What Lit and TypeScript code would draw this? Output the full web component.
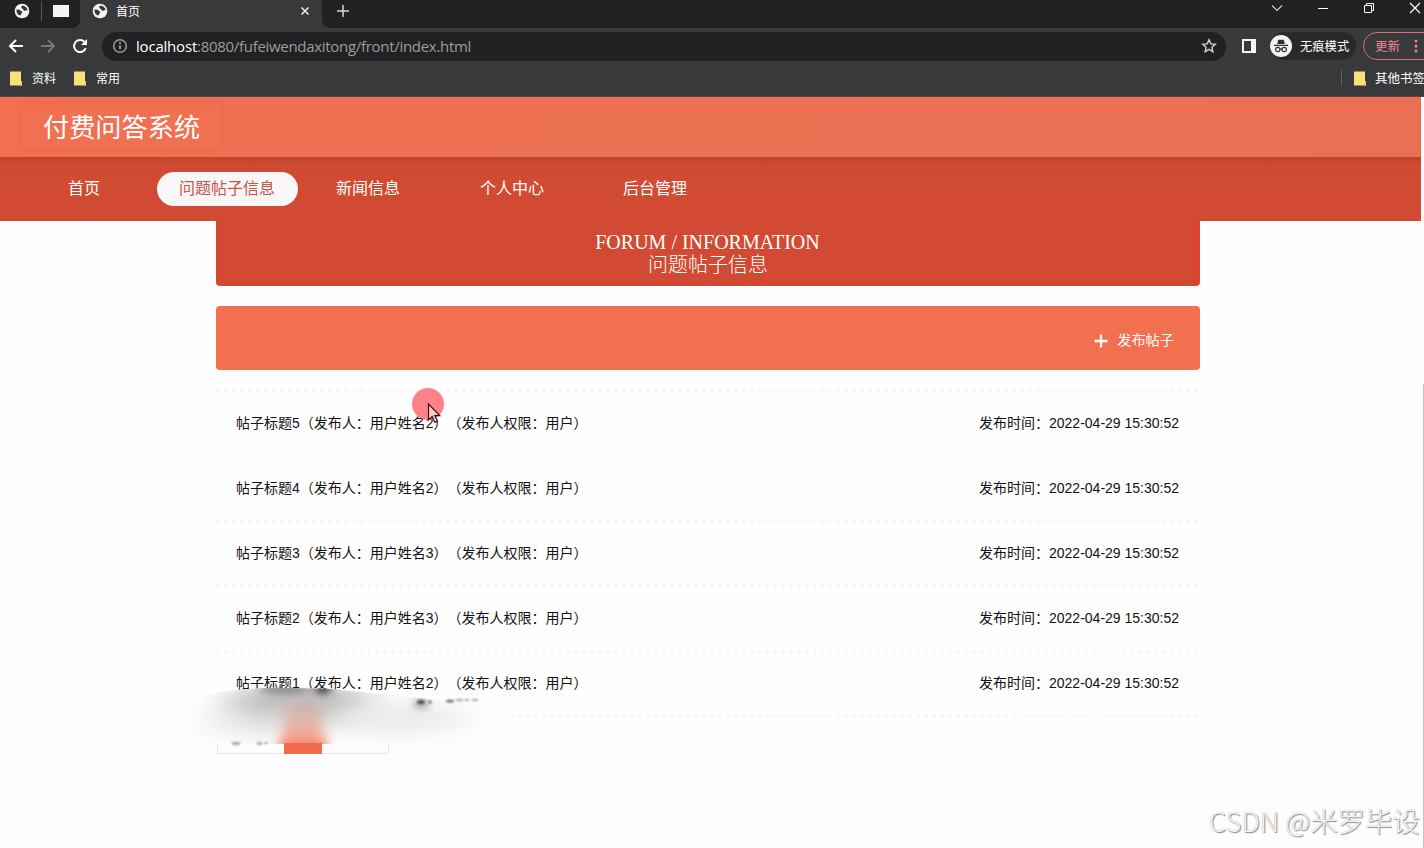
import { LitElement, html, css, svg } from "lit";
import { customElement } from "lit/decorators.js";

const globe = html`<svg class="globe" width="16" height="16" viewBox="0 0 16 16">
  <circle cx="8" cy="8" r="7.3" fill="#f4f5f5" />
  <path d="M2.500 6.500c1.700-.1 3.300.2 3.900 1 .5.800 1.900.5 2 1.600.1.900-1.200 1-1.300 1.900v1.200C4.600 12.600 2.300 10.500 2.500 6.500zM7.500 3.200C7 4.200 7.200 5 8 5.500c.7.500 1.300.6 1.500 1.400.3 1 1.400 1.200 2.200.7.700-.4 1.200-.3 2-.2-.3-2.400-2.200-4.400-4.700-4.900z" fill="#333537" />
</svg>`;

const folder = html`<svg width="13" height="15" viewBox="0 0 13 15">
  <path d="M0 .5h11v9.500l1 .5v4H0z" fill="#fbdf79" />
  <path d="M10 10.500h2v4h-2z" fill="#f3ce58" />
</svg>`;

@customElement("browser-chrome")
export class BrowserChrome extends LitElement {
  static styles = css`
    :host {
      display: block;
      height: 97px;
      box-sizing: border-box;
      background: #37393a;
      border-bottom: 1px solid #55463f;
      color: #fff;
      font: 12px/16px "Noto Sans CJK SC", sans-serif;
      overflow: hidden;
    }
    svg { display: block; flex: none; }
    .tabs { display: flex; height: 28px; background: #37393a; }
    .pinned { display: flex; align-items: center; width: 80px; height: 28px; box-sizing: border-box; padding: 0 10px 6px 14px; border-radius: 0 0 8px 0; background: #202122; }
    .pinned .sep { width: 1px; height: 20px; background: #55585a; margin: 0 11px; }
    .mail { width: 16px; height: 12px; background: #f3f5f5; }
    .tab { display: flex; align-items: center; width: 242px; box-sizing: border-box; padding: 0 12px 6px; }
    .tab span { margin-left: 8px; flex: 1; }
    .rest { display: flex; flex: 1; background: #202122; border-radius: 0 0 0 8px; }
    .add { margin: 5px 0 0 15px; }
    .win { display: flex; margin: 0 3px 0 auto; align-items: flex-start; padding-top: 2px; gap: 34px; }
    .bar { display: flex; align-items: center; height: 36px; padding-left: 8px; }
    .nav { display: flex; gap: 16px; }
    .url { display: flex; flex: none; align-items: center; width: 1124px; height: 29px; box-sizing: border-box; margin-left: 14px; padding: 0 9px 0 10px; border-radius: 15px; background: #202122; }
    .address { flex: 1; margin: -1px 0 0 8px; font: 15px/20px "Open Sans", "Noto Sans", sans-serif; letter-spacing: -0.3px; color: #9b9d9f; }
    .address b { font-weight: 400; color: #fff; letter-spacing: -0.200px; }
    .panel { margin-left: 16px; }
    .private { display: flex; flex: none; align-items: center; width: 86px; height: 28px; margin-left: 14px; border-radius: 14px; background: #27292a; white-space: nowrap; }
    .private span { margin-left: 8px; font-size: 12.300px; }
    .update { display: flex; align-items: center; flex: none; box-sizing: border-box; width: 80px; height: 28px; margin-left: 7px; padding-left: 11px; border: 1px solid #d96c7f; border-radius: 14px; color: #f08797; }
    .update span { font-size: 12.500px; width: 36px; }
    .marks { display: flex; align-items: center; height: 28px; padding-left: 10px; white-space: nowrap; }
    .marks span { margin: 0 18px 0 9px; }
    .marks .others { display: flex; align-items: center; flex: none; width: 83px; margin-left: auto; }
    .others i { flex: none; width: 1px; height: 16px; background: #5d6061; margin-right: 12px; }
    .others span { margin: 0 0 0 8px; font-size: 12.500px; }
  `;

  render() {
    return html`
      <div class="tabs">
        <div class="pinned">${globe}<div class="sep"></div><div class="mail"></div></div>
        <div class="tab">
          ${globe}<span>首页</span>
          <svg width="10" height="10" viewBox="0 0 10 10"><path d="M1.500 1.500l7 7m0-7l-7 7" stroke="#e9eaea" stroke-width="1.600" /></svg>
        </div>
        <div class="rest">
          <svg class="add" width="12" height="12" viewBox="0 0 12 12"><path d="M6 0v12M0 6h12" stroke="#d5d6d6" stroke-width="1.500" /></svg>
          <div class="win">
            <svg width="12" height="12" viewBox="0 0 12 12"><path d="M1 3.500l5 5 5-5" fill="none" stroke="#c9caca" stroke-width="1.200" /></svg>
            <svg width="12" height="12" viewBox="0 0 12 12"><path d="M1 6.500h10" stroke="#fff" /></svg>
            <svg width="12" height="12" viewBox="0 0 12 12"><path d="M1.500 3.500h7v7h-7zM3.500 3.500v-2h7v7h-2" fill="none" stroke="#fff" /></svg>
            <svg width="12" height="12" viewBox="0 0 12 12"><path d="M1 1l10 10M11 1L1 11" stroke="#fff" stroke-width="1.200" /></svg>
          </div>
        </div>
      </div>
      <div class="bar">
        <div class="nav">
          <svg width="16" height="16" viewBox="0 0 16 16"><path d="M15 8H2M8 2L2 8l6 6" fill="none" stroke="#fff" stroke-width="2" /></svg>
          <svg width="16" height="16" viewBox="0 0 16 16"><path d="M1 8h13M8 2l6 6-6 6" fill="none" stroke="#77797a" stroke-width="1.800" /></svg>
          <svg width="16" height="16" viewBox="0 0 16 16"><path d="M13.700 10.200A6 6 0 1 1 12.300 3.800" fill="none" stroke="#fff" stroke-width="2" /><path d="M15 1v6H9z" fill="#fff" /></svg>
        </div>
        <div class="url">
          <svg width="16" height="16" viewBox="0 0 16 16"><circle cx="8" cy="8" r="6.300" fill="none" stroke="#999b9c" stroke-width="1.500" /><path d="M8 7.200v4M8 4.200v1.700" stroke="#a9abac" stroke-width="1.700" /></svg>
          <div class="address"><b>localhost</b>:8080/fufeiwendaxitong/front/index.html</div>
          <svg width="16" height="16" viewBox="0 0 16 16"><path d="M8 1.800l1.800 4.100 4.500.4-3.400 3 1 4.400L8 11.400l-3.900 2.300 1-4.400-3.400-3 4.500-.4z" fill="none" stroke="#d0d1d1" stroke-width="1.400" /></svg>
        </div>
        <svg class="panel" width="14" height="14" viewBox="0 0 14 14"><path d="M0 0h14v14H0zM2 2v10h7V2z" fill="#f4f5f5" fill-rule="evenodd" /></svg>
        <div class="private">
          <svg width="22" height="22" viewBox="0 0 22 22">
            <circle cx="11" cy="11" r="11" fill="#f3f4f4" />
            <path d="M7.200 9l1-4.200h5.600l1 4.200zM4 9.700h14v1.300H4z" fill="#303233" />
            <g fill="none" stroke="#303233" stroke-width="1.200"><circle cx="7.800" cy="14.500" r="2.200" /><circle cx="14.200" cy="14.500" r="2.200" /><path d="M10 14.200q1-.7 2 0" /></g>
          </svg>
          <span>无痕模式</span>
        </div>
        <div class="update"><span>更新</span>
          <svg width="10" height="16" viewBox="0 0 10 16" fill="#ef8594"><circle cx="5" cy="3" r="1.500" /><circle cx="5" cy="8" r="1.500" /><circle cx="5" cy="13" r="1.500" /></svg>
        </div>
      </div>
      <div class="marks">
        ${folder}<span>资料</span>${folder}<span>常用</span>
        <div class="others"><i></i>${folder}<span>其他书签</span></div>
      </div>
    `;
  }
}

interface Post { title: string; author: string; }

@customElement("app-root")
export class AppRoot extends LitElement {
  static styles = css`
    :host {
      display: block;
      position: relative;
      width: 1424px;
      height: 848px;
      overflow: hidden;
      background: #fffeff;
      font-family: "Liberation Sans", "Noto Sans CJK SC", sans-serif;
      text-spacing-trim: space-all;
      color: #111;
    }
    .page { width: 1421px; }
    .brand { display: flex; align-items: center; height: 60px; box-sizing: border-box; padding-left: 22px; background: linear-gradient(90deg, #f46f51, #ed7052 14%, #eb7053); }
    .brand h1 { margin: 0; width: 198px; height: 44px; box-sizing: border-box; padding-left: 21px; border-radius: 3px; box-shadow: 0 0 4px #d85d4080; background: #f07051; color: #fff; font-size: 26.200px; line-height: 47px; font-weight: 400; white-space: nowrap; }
    .menu { display: flex; align-items: center; height: 64px; box-sizing: border-box; padding-left: 46px; background: linear-gradient(#bd432b, #cd4a31 7px, #d14a32 16px, #d24a33); color: #fff; font-size: 16px; line-height: 24px; }
    .menu span { box-sizing: border-box; height: 34px; padding: 5px 22px 0; border-radius: 17px; white-space: nowrap; }
    .menu .home { margin-right: 35px; }
    .menu .active { width: 141px; background: #f8f6f7; color: #c4564c; }
    .menu .news { margin-left: 16px; }
    .menu .mine { margin-left: 36px; }
    .menu .admin { margin-left: 35px; }
    .content { width: 984px; margin-left: 216px; }
    .heading { height: 65px; box-sizing: border-box; padding-top: 10px; background: linear-gradient(90deg, #d9432f 0, #d24a33 8px, #d24a33 976px, #dd402d); border-radius: 0 0 4px 4px; color: #fff; text-align: center; font: 20px/23px "Liberation Serif", "Noto Sans CJK SC", serif; }
    .heading div { height: 23px; padding-right: 1px; }
    .heading .zh { font-weight: 300; padding: 0; }
    .actions { display: flex; justify-content: flex-end; align-items: center; gap: 9px; height: 64px; box-sizing: border-box; margin-top: 20px; padding: 3px 26px 0 0; border-radius: 4px; background: #f26f50; color: #fff; font-size: 14.200px; line-height: 20px; }
    .actions svg { margin-top: 2px; }
    .actions span { margin-top: 1px; }
    .posts { margin-top: 19px; }
    .post { display: flex; justify-content: space-between; align-items: center; height: 65px; box-sizing: border-box; padding: 0 21px 4px 20px; font-size: 14px; white-space: nowrap; border-top: 4px dotted #f8f4f9; }
    .end { height: 4px; box-sizing: border-box; border-top: 4px dotted #faf6fa; }
    .pager { display: flex; width: 172px; height: 37px; box-sizing: border-box; border: 1px solid #ebe5e8; border-top: 0; border-radius: 2px; margin: -1px 0 0 1px; }
    .pager i { width: 38px; height: 37px; margin-left: 66px; background: #f26a4c; }
    .smear { position: absolute; left: 150px; top: 682px; }
    .pointer { position: absolute; left: 412px; top: 388px; }
    .scroll { position: absolute; right: 0; top: 384px; width: 1px; height: 464px; background: #c5c3c8; }
    .mark { position: absolute; left: 1209px; top: 802px; font: 300 27.400px/36px "Noto Sans CJK SC", sans-serif; color: #f4f3f5; text-shadow: 1px 1px 1px #888, 0 0 1px #aaa; white-space: nowrap; }
  `;

  posts: Post[] = [
    { title: "帖子标题5", author: "用户姓名2" },
    { title: "帖子标题4", author: "用户姓名2" },
    { title: "帖子标题3", author: "用户姓名3" },
    { title: "帖子标题2", author: "用户姓名3" },
    { title: "帖子标题1", author: "用户姓名2" },
  ];

  smear() {
    return svg`
      <defs>
        <filter id="soft" x="-60%" y="-100%" width="220%" height="300%"><feGaussianBlur stdDeviation="17 10" /></filter>
        <filter id="small" x="-60%" y="-150%" width="220%" height="400%"><feGaussianBlur stdDeviation="5 3.500" /></filter>
        <filter id="glow" x="-60%" y="-60%" width="220%" height="220%"><feGaussianBlur stdDeviation="6 3" /></filter>
        <filter id="tiny" x="-50%" y="-100%" width="200%" height="300%"><feGaussianBlur stdDeviation="1" /></filter>
        <linearGradient id="rise" x1="0" y1="0" x2="0" y2="1">
          <stop offset="0" stop-color="#f26f50" stop-opacity="0" />
          <stop offset=".5" stop-color="#f26f50" stop-opacity=".4" />
          <stop offset="1" stop-color="#f26f50" />
        </linearGradient>
        <clipPath id="band"><path d="M0 20L86 8Q115 5 140 6L182 7Q200 9 255 14Q300 20 350 22V62H0z" /></clipPath>
      </defs>
      <path d="M84 9q90-4 146 5l70 12h56v16H64V12z" fill="#fffeff" />
      <g clip-path="url(#band)">
        <rect width="350" height="62" fill="#fffeff" />
        <ellipse cx="150" cy="22" rx="74" ry="21" fill="#bcbbba" filter="url(#soft)" />
        <ellipse cx="110" cy="40" rx="60" ry="14" fill="#e0dfdf" opacity=".6" filter="url(#soft)" />
        <ellipse cx="250" cy="36" rx="70" ry="16" fill="#ebebea" filter="url(#soft)" />
        <ellipse cx="135" cy="7" rx="26" ry="5" fill="#666" opacity=".65" filter="url(#small)" />
        <ellipse cx="173" cy="7" rx="8" ry="5" fill="#333" filter="url(#small)" />
        <ellipse cx="271" cy="22" rx="6" ry="5" fill="#777" opacity=".8" filter="url(#small)" />
        <path d="M138 16h30l4 30 8 26h-54l8-26z" fill="url(#rise)" filter="url(#glow)" />
      </g>
      <path d="M134 61h38v9h-38z" fill="#f26a4c" />
      <g fill="#333" filter="url(#tiny)">
        <ellipse cx="271" cy="20" rx="4" ry="2" opacity=".8" /><circle cx="280" cy="20" r="1.500" opacity=".8" />
        <ellipse cx="300" cy="19" rx="4" ry="1.500" opacity=".7" /><path d="M306 17h7v2h-7zM315 17h4v2h-4zM322 17h6v2h-6z" opacity=".45" />
      </g>
      <g fill="#777" filter="url(#tiny)"><path d="M82 60h8v3h-8zM107 60h5v3h-5zM114 60h4v2h-4z" opacity=".6" /></g>
    `;
  }

  render() {
    return html`
      <browser-chrome></browser-chrome>
      <div class="page">
        <header class="brand"><h1>付费问答系统</h1></header>
        <nav class="menu">
          <span class="home">首页</span><span class="active">问题帖子信息</span><span class="news">新闻信息</span><span class="mine">个人中心</span><span class="admin">后台管理</span>
        </nav>
        <main class="content">
          <div class="heading"><div>FORUM / INFORMATION</div><div class="zh">问题帖子信息</div></div>
          <div class="actions">
            <svg width="14" height="14" viewBox="0 0 14 14"><path d="M7 .5v13M.5 7h13" stroke="#fff" stroke-width="2.300" /></svg>
            <span>发布帖子</span>
          </div>
          <div class="posts">
            ${this.posts.map((p) => html`<div class="post"><span>${p.title}（发布人：${p.author}）（发布人权限：用户）</span><span>发布时间：2022-04-29 15:30:52</span></div>`)}
            <div class="end"></div>
          </div>
          <div class="pager"><i></i></div>
        </main>
      </div>
      <svg class="smear" width="380" height="70" viewBox="0 0 380 70">${this.smear()}</svg>
      <svg class="pointer" width="34" height="38" viewBox="0 0 34 38">
        <circle cx="16" cy="16" r="16" fill="#ff6670" fill-opacity=".82" />
        <path d="M16.500 16v16l3.700-3.400 2.600 5.700 2.600-1.200-2.600-5.500h5z" fill="#fff" fill-opacity=".55" stroke="#311" stroke-width="1.200" />
      </svg>
      <div class="scroll"></div>
      <div class="mark">CSDN @米罗毕设</div>
    `;
  }
}
